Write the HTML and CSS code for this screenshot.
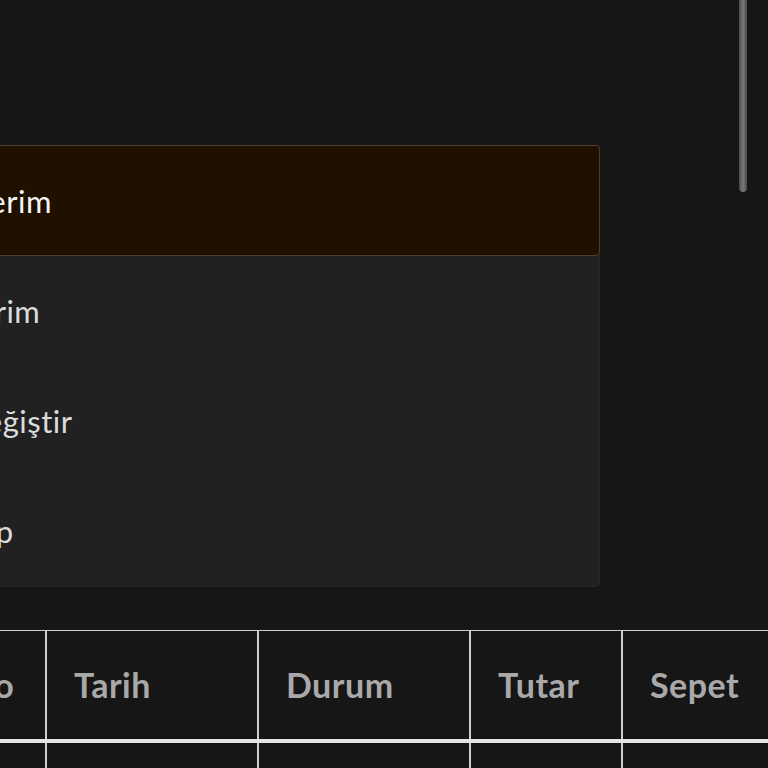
FILE: index.html
```html
<!DOCTYPE html>
<html lang="tr">
<head>
    <meta charset="UTF-8">
    <meta name="viewport" content="width=device-width, initial-scale=1.0">
    <title>Siparişlerim</title>
    <link rel="stylesheet" href="styles.css">
</head>
<body>
    <div class="scroll-thumb"></div>
    <div class="page">
        <nav class="menu">
            <a class="menu-item active" href="#">Siparişlerim</a>
            <a class="menu-item" href="#">Adreslerim</a>
            <a class="menu-item" href="#">Şifre Değiştir</a>
            <a class="menu-item" href="#">Çıkış Yap</a>
        </nav>

        <table class="orders">
            <thead>
                <tr>
                    <th class="col-no">No</th>
                    <th class="col-date">Tarih</th>
                    <th class="col-status">Durum</th>
                    <th class="col-total">Tutar</th>
                    <th class="col-cart">Sepet</th>
                </tr>
            </thead>
            <tbody>
                <tr>
                    <td>1</td>
                    <td>12.03.2024</td>
                    <td>Hazırlanıyor</td>
                    <td>249 ₺</td>
                    <td>Gör</td>
                </tr>
            </tbody>
        </table>
    </div>
</body>
</html>
```

FILE: styles.css
```css
* {
  box-sizing: border-box;
  margin: 0;
  padding: 0;
}

body {
  --bg: #161616;
  --card: #212121;
  --active: #201000;
  --gold: #4f3f27;
  --line: #cfcfcf;

  background: var(--bg);
  color: #dcdcdc;
  font-family: 'Lato', 'Noto Sans', sans-serif;
  overflow: hidden;
  height: 768px;
}

.page {
  margin-left: -180px;
  padding-top: 145px;
}

/* menu */
.menu {
  width: 780px;
  display: flex;
  flex-direction: column;
  background: var(--card);
  border: 1px solid #272727;
  border-radius: 4px;
}

.menu-item {
  height: 110px;
  display: flex;
  align-items: center;
  padding-left: 68px;
  font-size: 31px;
  letter-spacing: 0.5px;
  color: #dcdcdc;
  text-decoration: none;
}

.menu-item.active {
  height: 111px;
  margin: -1px -1px 0 -1px;
  background: var(--active);
  border: 1px solid var(--gold);
  border-radius: 4px;
  color: #f4f4f4;
}

/* tabla */
.orders {
  margin-top: 43px;
  margin-left: 119px;
  border-collapse: collapse;
  table-layout: fixed;
  width: 850px;
}

.orders th,
.orders td {
  border: 2px solid var(--line);
  text-align: left;
  padding: 0 0 0 27px;
  height: 110px;
}

.orders th {
  font-size: 34px;
  font-weight: bold;
  letter-spacing: 0.5px;
  color: #a9a9a9;
  border-top-width: 1px;
}

.orders thead tr {
  border-bottom: 4px solid #e4e4e4;
}

.orders td {
  font-size: 28px;
  color: #dcdcdc;
  vertical-align: bottom;
  padding-bottom: 30px;
}

.col-no { width: 106px; }
.col-date { width: 212px; }
.col-status { width: 212px; }
.col-total { width: 152px; }
.col-cart { width: 168px; }

/* barra de scroll */
.scroll-thumb {
  position: absolute;
  top: 0;
  left: 739px;
  width: 8px;
  height: 192px;
  background: linear-gradient(90deg, #4a4a4a, #7a7a7a 50%, #4a4a4a);
  border-radius: 0 0 4px 4px;
}
```
